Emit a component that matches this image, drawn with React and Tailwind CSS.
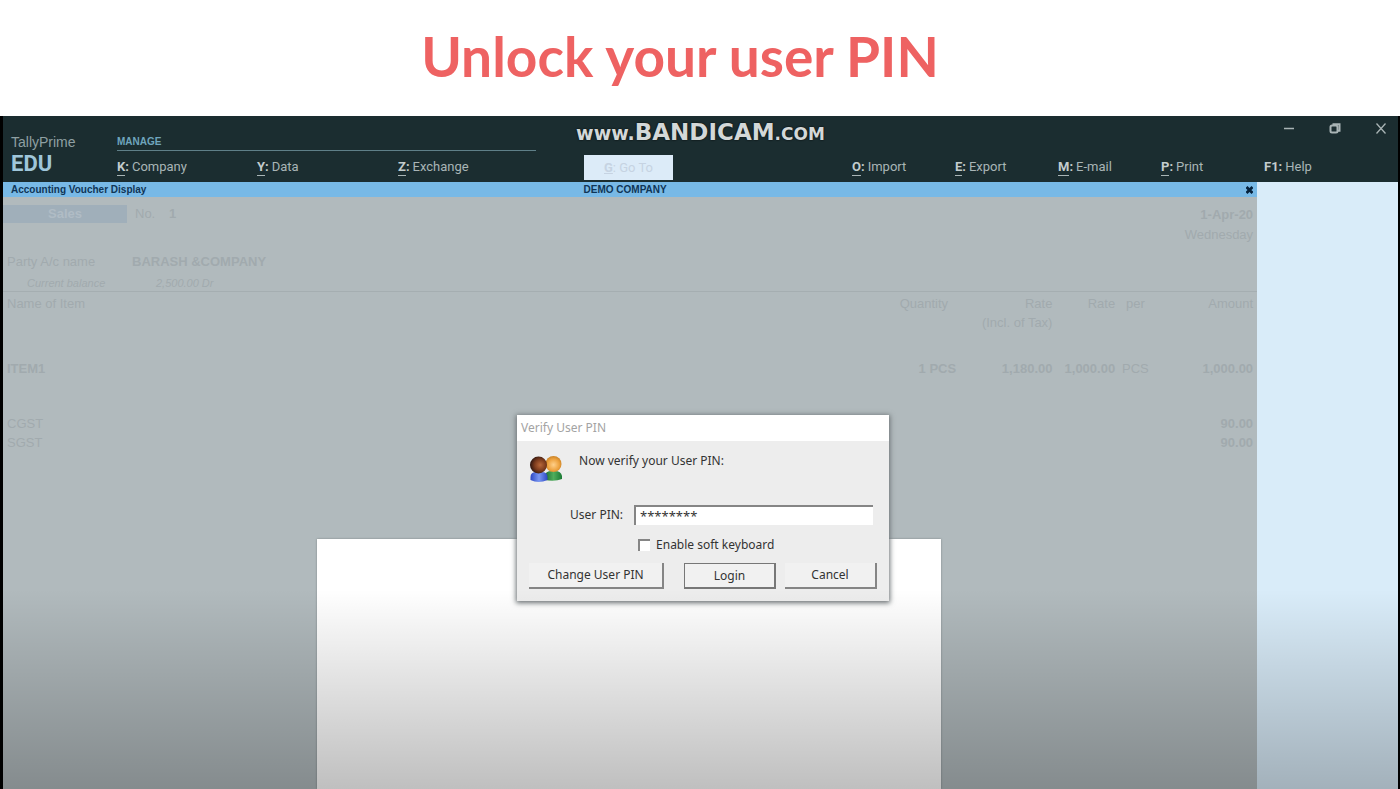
const tools = [
  ["O", "Import"],
  ["E", "Export"],
  ["M", "E-mail"],
  ["P", "Print"],
];

function MenuItem({ hot, label, underline = true }) {
  return (
    <button type="button" className="flex items-start justify-self-start text-[#a9b5b6]">
      <span className="font-bold text-[#c3cccd]">
        <span className={underline ? "border-b border-[#a9b5b6] pb-px" : ""}>{hot}</span>:
      </span>
      <span className="ml-[3px]">{label}</span>
    </button>
  );
}

function WindowControls() {
  return (
    <div className="absolute top-1 right-[11px] flex w-[104px] items-center justify-between text-[#a9b4b5]">
      <button type="button" aria-label="Minimize">
        <svg width="12" height="16" viewBox="0 0 12 16" fill="none" stroke="currentColor" strokeWidth="1.5">
          <path d="M1 8.500h10" />
        </svg>
      </button>
      <button type="button" aria-label="Restore">
        <svg width="12" height="16" viewBox="0 0 12 16" fill="none" stroke="currentColor" strokeWidth="2">
          <rect x="1.500" y="5.500" width="7" height="7" rx="1.500" />
          <path d="M3.500 4.200h7v6.600H9" />
        </svg>
      </button>
      <button type="button" aria-label="Close">
        <svg width="12" height="16" viewBox="0 0 12 16" fill="none" stroke="currentColor" strokeWidth="1.3">
          <path d="M1.500 3.500l9 10M10.500 3.500l-9 10" />
        </svg>
      </button>
    </div>
  );
}

function Header() {
  return (
    <header className="relative h-[66px] bg-[#1b2d30] pt-[14px]">
      <div className="absolute inset-x-0 top-1 flex items-baseline justify-center font-['DejaVu_Sans',sans-serif] leading-6 font-bold text-[#d3d8d8] [text-shadow:0_0_2px_#000]">
        <span className="text-[19px]">www.</span>
        <span className="text-[23px]">BANDICAM</span>
        <span className="text-[17px]">.COM</span>
      </div>
      <WindowControls />
      <div className="grid grid-cols-[114fr_140fr_141fr_186fr_268fr_103fr_103fr_103fr_103fr_134fr] font-[Roboto,sans-serif] text-[13px] leading-4">
        <div className="row-span-2 pl-2">
          <div className="font-['Liberation_Sans',sans-serif] text-[14px] leading-6 text-[#8fa0a3]">TallyPrime</div>
          <div className="text-[22px] leading-5 font-bold text-[#9fc6da]">EDU</div>
        </div>
        <div className="col-span-3 mr-12 mb-2 border-b border-[#5f7f88] pt-1 font-['Liberation_Sans',sans-serif] text-[10px] leading-4 font-bold text-[#6fa5bd]">
          MANAGE
        </div>
        <div className="col-span-6" />
        <MenuItem hot="K" label="Company" />
        <MenuItem hot="Y" label="Data" />
        <MenuItem hot="Z" label="Exchange" />
        <button type="button" className="-mt-1 h-[25px] w-[89px] justify-self-start bg-[#dcebf8] text-[#c6d3e2]">
          <b className="underline">G</b>: Go To
        </button>
        {tools.map(([hot, label]) => (
          <MenuItem key={hot} hot={hot} label={label} />
        ))}
        <MenuItem hot="F1" label="Help" underline={false} />
      </div>
    </header>
  );
}

function Voucher() {
  return (
    <main className="flex min-w-0 flex-1 flex-col bg-[#b1babd] font-['Liberation_Sans',sans-serif] text-[13px] text-[#a1aaae]">
      <div className="grid h-[15px] grid-cols-[581fr_674fr] items-center bg-[#78b9e6] text-[10px] leading-[14px] font-bold text-[#0f3556]">
        <span className="pl-2">Accounting Voucher Display</span>
        <span className="flex items-center justify-between pr-1">
          DEMO COMPANY
          <button type="button" aria-label="Close voucher">
            <svg width="7" height="8" viewBox="0 0 7 8" stroke="#06223c" strokeWidth="2.8">
              <path d="M.5 1l6 6M6.500 1l-6 6" />
            </svg>
          </button>
        </span>
      </div>

      <div className="flex items-start justify-between pt-2 pr-1">
        <div className="flex leading-[18px]">
          <span className="w-[124px] bg-[#a0afba] text-center font-bold text-[#b0bcc5]">Sales</span>
          <span className="w-[42px] pl-2">No.</span>
          <span className="font-bold">1</span>
        </div>
        <div className="text-right leading-5">
          <div className="font-bold">1-Apr-20</div>
          <div>Wednesday</div>
        </div>
      </div>
      <div className="flex pt-2 pl-1 leading-[18px]">
        <span className="w-[125px]">Party A/c name</span>
        <span className="font-bold">BARASH &amp;COMPANY</span>
      </div>
      <div className="flex pt-1 pl-6 text-[11px] leading-4 italic">
        <span className="w-[129px]">Current balance</span>
        <span>2,500.00 Dr</span>
      </div>

      <table className="w-full table-fixed border-t border-[#a5aeb1] font-bold">
        <colgroup>
          <col className="w-[68%]" />
          <col className="w-[8%]" />
          <col className="w-[8%]" />
          <col className="w-[5%]" />
          <col className="w-[3%]" />
          <col className="w-[8%]" />
        </colgroup>
        <thead>
          <tr className="h-[45px] text-right align-top leading-[19px] [&>th]:pt-[2px] [&>th]:font-normal">
            <th className="pl-1 text-left">Name of Item</th>
            <th className="pr-2">Quantity</th>
            <th className="pr-1 whitespace-nowrap">Rate<br />(Incl. of Tax)</th>
            <th className="pr-1">Rate</th>
            <th className="pr-3">per</th>
            <th className="pr-1">Amount</th>
          </tr>
        </thead>
        <tbody className="text-right leading-[19px] whitespace-nowrap">
          <tr className="h-[64px]">
            <td className="pl-1 text-left">ITEM1</td>
            <td>1 PCS</td>
            <td className="pr-1">1,180.00</td>
            <td className="pr-1">1,000.00</td>
            <td className="pr-2 font-normal">PCS</td>
            <td className="pr-1">1,000.00</td>
          </tr>
          <tr className="h-8 align-bottom">
            <td className="pl-1 text-left font-normal" colSpan={5}>CGST</td>
            <td className="pr-1">90.00</td>
          </tr>
          <tr>
            <td className="pl-1 text-left font-normal" colSpan={5}>SGST</td>
            <td className="pr-1">90.00</td>
          </tr>
        </tbody>
      </table>

      <div className="mt-[87px] ml-[25%] w-[49.8%] flex-1 bg-white shadow-[0_0_2px_#7b8386]" />
    </main>
  );
}

function UsersIcon() {
  return (
    <svg width="34" height="28" viewBox="0 0 34 28" className="shrink-0">
      <defs>
        <radialGradient id="dark" cx=".6" cy=".5" r=".6">
          <stop offset="0" stopColor="#b9683a" />
          <stop offset=".55" stopColor="#7c3b1d" />
          <stop offset="1" stopColor="#2b1510" />
        </radialGradient>
        <radialGradient id="fair" cx=".5" cy=".55" r=".6">
          <stop offset="0" stopColor="#ffd08a" />
          <stop offset=".6" stopColor="#eda23f" />
          <stop offset="1" stopColor="#c07a20" />
        </radialGradient>
        <linearGradient id="blue" x2="1" y2="0">
          <stop offset="0" stopColor="#2c47c4" />
          <stop offset=".5" stopColor="#7a97f2" />
          <stop offset="1" stopColor="#2c47c4" />
        </linearGradient>
        <linearGradient id="green" x2="1" y2="0">
          <stop offset="0" stopColor="#1e6b34" />
          <stop offset=".5" stopColor="#4fae5c" />
          <stop offset="1" stopColor="#1c7a35" />
        </linearGradient>
      </defs>
      <path d="M16 25v-4q0-5 7-5h3q6 0 7 5v3q-7 3-17 1z" fill="url(#green)" />
      <circle cx="24.500" cy="9" r="8" fill="url(#fair)" />
      <path d="M1.500 25v-3q0-5 6-5h5q6 0 6 5v3q-9 4-17 0z" fill="url(#blue)" />
      <circle cx="9.500" cy="10" r="8.500" fill="url(#dark)" />
    </svg>
  );
}

function PinDialog() {
  return (
    <form
      role="dialog"
      aria-labelledby="dlg-title"
      onSubmit={(e) => e.preventDefault()}
      className="absolute top-[299px] left-[36.85%] w-[372px] bg-[#ededed] font-['Noto_Sans',sans-serif] text-[12px] leading-4 text-[#333] shadow-[0_1px_5px_1px_#6a7073]"
    >
      <h2 id="dlg-title" className="h-[26px] bg-white pt-[5px] pl-1 text-[#a3a3a3]">Verify User PIN</h2>
      <div className="flex gap-4 pt-3 pl-3">
        <div className="pt-[2px]"><UsersIcon /></div>
        <p>Now verify your User PIN:</p>
      </div>
      <div className="mt-[22px] flex items-center pr-4 pl-[53px]">
        <label htmlFor="pin" className="w-[64px]">User PIN:</label>
        <input
          id="pin"
          type="text"
          defaultValue="********"
          className="h-5 min-w-0 flex-1 border-t-2 border-l-2 border-[#858585] bg-white pl-1 text-[13px] outline-none"
        />
      </div>
      <div className="mt-3 flex items-center gap-[6px] pl-[121px]">
        <input
          id="soft"
          type="checkbox"
          className="h-3 w-3 appearance-none border-t-2 border-l-2 border-[#858585] bg-white"
        />
        <label htmlFor="soft">Enable soft keyboard</label>
      </div>
      <div className="mt-[10px] flex pr-3 pb-3 pl-3">
        <button type="button" className="h-[26px] w-[135px] border-r-2 border-b-2 border-[#858585] bg-[#f1f1f1]">Change User PIN</button>
        <button type="submit" className="ml-5 h-[26px] w-[92px] border border-r-2 border-b-2 border-[#777] bg-[#f1f1f1]">Login</button>
        <button type="button" className="ml-[9px] h-[26px] flex-1 border-r-2 border-b-2 border-[#858585] bg-[#f1f1f1]">Cancel</button>
      </div>
    </form>
  );
}

export default function App() {
  return (
    <div className="flex min-h-screen flex-col bg-white">
      <h1 className="h-[116px] pt-6 pr-10 text-center font-[Lato,sans-serif] text-[55px] leading-[64px] font-bold text-[#ee6262]">
        Unlock your user PIN
      </h1>
      <div className="relative flex flex-1 flex-col border-r-2 border-l-[3px] border-black">
        <Header />
        <div className="flex flex-1">
          <Voucher />
          <aside className="w-[10.1%] bg-[#d9ecf9]" />
        </div>
        <PinDialog />
        <div className="pointer-events-none absolute inset-x-0 bottom-0 h-[200px] bg-linear-to-b from-transparent to-black/25" />
      </div>
    </div>
  );
}
